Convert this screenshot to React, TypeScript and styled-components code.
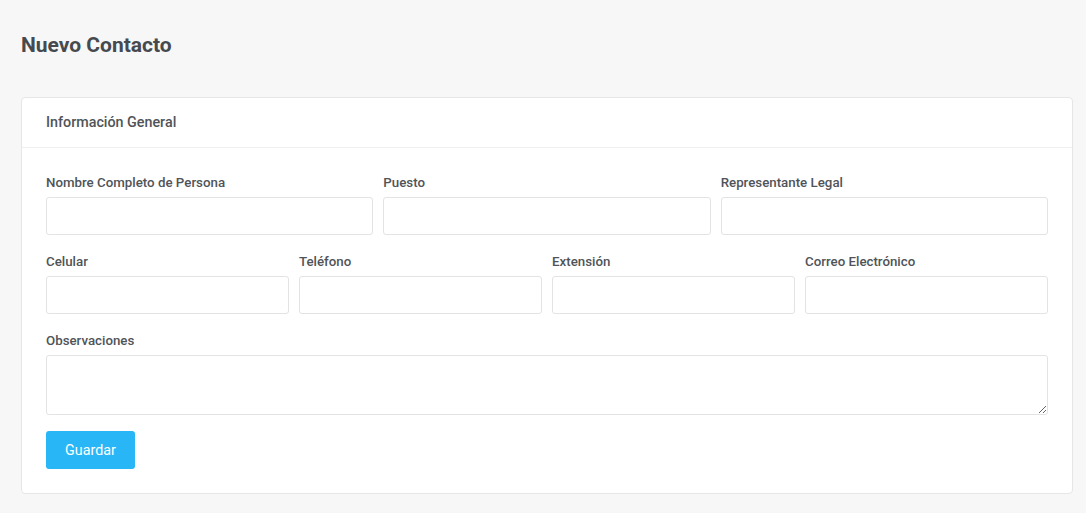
import React from "react";
import styled, { createGlobalStyle } from "styled-components";

const GlobalStyle = createGlobalStyle`
    html, body {
        margin: 0;
        padding: 0;
        background: #f7f7f7;
        font-family: Roboto, "Liberation Sans", Arial, sans-serif;
        color: #4a4a4a;
    }
    * { box-sizing: border-box; }
`;

const Page = styled.div`
    padding: 30px 13px 20px 21px;
`;

const PageTitle = styled.h1`
    margin: 0 0 37px 0;
    font-size: 21px;
    font-weight: 700;
    line-height: 30px;
    color: #464a4e;
`;

const Card = styled.div`
    background: #ffffff;
    border: 1px solid #e6e6e6;
    border-radius: 4px;
`;

const CardHeader = styled.div`
    height: 50px;
    padding: 0 24px 1px 24px;
    display: flex;
    align-items: center;
    border-bottom: 1px solid #efefef;
    font-size: 14.3px;
    font-weight: 500;
    color: #505458;
`;

const CardBody = styled.form`
    padding: 24px 24px 24px 24px;
    display: flex;
    flex-direction: column;
`;

const Row = styled.div<{ cols: number }>`
    display: grid;
    grid-template-columns: repeat(${(p) => p.cols}, 1fr);
    column-gap: 10px;
    margin-bottom: 16px;
`;

const Field = styled.div`
    display: flex;
    flex-direction: column;
`;

const Label = styled.label`
    font-size: 13.3px;
    font-weight: 500;
    line-height: 20px;
    color: #505458;
    padding-top: 1px;
    margin-bottom: 4px;
`;

const Input = styled.input`
    height: 38px;
    border: 1px solid #e3e3e3;
    border-radius: 3px;
    padding: 0 10px;
    font-family: inherit;
    font-size: 14px;
    background: #fff;
    outline: none;
`;

const TextArea = styled.textarea`
    height: 60px;
    border: 1px solid #e3e3e3;
    border-radius: 3px;
    padding: 8px 10px;
    font-family: inherit;
    font-size: 14px;
    resize: vertical;
    outline: none;
`;

const SaveButton = styled.button`
    align-self: flex-start;
    width: 89px;
    height: 38px;
    border: none;
    border-radius: 3px;
    background: #29b6f6;
    color: #ffffff;
    font-family: inherit;
    font-size: 14.3px;
    cursor: pointer;
`;

const filasSuperiores = [
    ["Nombre Completo de Persona", "Puesto", "Representante Legal"],
    ["Celular", "Teléfono", "Extensión", "Correo Electrónico"],
];

const App = () => {
    return (
        <Page>
            <GlobalStyle />
            <PageTitle>Nuevo Contacto</PageTitle>
            <Card>
                <CardHeader>Información General</CardHeader>
                <CardBody onSubmit={(e) => e.preventDefault()}>
                    {filasSuperiores.map((fila, i) => (
                        <Row key={i} cols={fila.length}>
                            {fila.map((campo) => (
                                <Field key={campo}>
                                    <Label>{campo}</Label>
                                    <Input type="text" />
                                </Field>
                            ))}
                        </Row>
                    ))}
                    <Row cols={1}>
                        <Field>
                            <Label>Observaciones</Label>
                            <TextArea />
                        </Field>
                    </Row>
                    <SaveButton type="submit">Guardar</SaveButton>
                </CardBody>
            </Card>
        </Page>
    );
};

export default App;
